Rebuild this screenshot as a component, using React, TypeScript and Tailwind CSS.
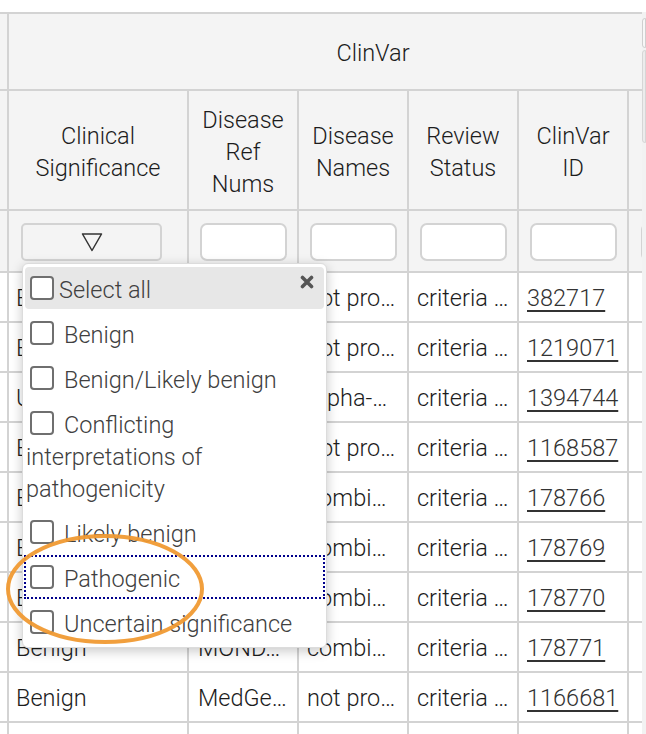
import React from "react";

const rows = [
  { sig: "Benign", ref: "MedGe…", names: "not pro…", id: "382717" },
  { sig: "Benign", ref: "MedGe…", names: "not pro…", id: "1219071" },
  { sig: "Uncertain significance", ref: "MedGe…", names: "Alpha-…", id: "1394744" },
  { sig: "Benign", ref: "MedGe…", names: "not pro…", id: "1168587" },
  { sig: "Benign", ref: "MOND…", names: "combi…", id: "178766" },
  { sig: "Benign", ref: "MOND…", names: "combi…", id: "178769" },
  { sig: "Benign", ref: "MOND…", names: "combi…", id: "178770" },
  { sig: "Benign", ref: "MOND…", names: "combi…", id: "178771" },
  { sig: "Benign", ref: "MedGe…", names: "not pro…", id: "1166681" },
];

const options = [
  "Benign",
  "Benign/Likely benign",
  "Conflicting interpretations of pathogenicity",
  "Likely benign",
  "Pathogenic",
  "Uncertain significance",
];

const cell = "shrink-0 border-r-2 border-b-2 border-[#d3d3d3]";
const dataCell = `${cell} w-[110px] flex items-center pt-[4px] whitespace-nowrap overflow-hidden`;

const Checkbox = ({ tight }: { tight?: boolean }) => (
  <span
    className={`inline-block w-[24px] h-[24px] ml-[4px] border-2 border-[#6f6f6f] rounded-[4px] bg-white align-[-2px] ${
      tight ? "mr-[5px]" : "mr-[10px]"
    }`}
  />
);

const FilterDropdown = () => (
  <div className="absolute left-[13px] top-[52px] z-10 w-[305px] bg-white border border-[#dcdcdc] rounded-[6px] shadow-[0_3px_12px_rgba(0,0,0,0.22)] pt-[3px] pb-[1px] text-[23.5px] leading-[32px] text-[#404040] text-left">
    <div className="relative mx-[2px] mb-[3px] pl-[1px] pt-[7px] pb-[3px] bg-[#e7e7e7] rounded-[4px]">
      <Checkbox tight />
      Select all
      <svg
        className="absolute right-[10px] top-[8px]"
        width="14"
        height="14"
        viewBox="0 0 14 14"
      >
        <path
          d="M2.5 2.5 L11.5 11.5 M11.5 2.5 L2.5 11.5"
          stroke="#555"
          strokeWidth="3.6"
          strokeLinecap="round"
        />
      </svg>
    </div>
    {options.map((o) => (
      <div
        key={o}
        className={`mx-[2px] mb-[3px] pl-[1px] pt-[7px] pb-[3px] ${
          o === "Pathogenic" ? "outline-2 outline-dotted outline-[#00008b] outline-offset-[-1px]" : ""
        }`}
      >
        <Checkbox />
        {o}
      </div>
    ))}
  </div>
);

const App = () => {
  return (
    <div className="relative w-[646px] h-[734px] overflow-hidden bg-white pt-[12px] font-['Roboto',sans-serif] font-light text-[23.5px] text-[#1c1c1c]">
      <div className="flex">
        <div className="w-[642px] overflow-hidden border-t-2 border-[#d3d3d3]">
          {/* group header */}
          <div className="flex h-[77px] bg-[#f4f4f4]">
            <div className={`${cell} w-[9px]`} />
            <div className={`${cell} w-[730px] flex items-center justify-center pt-[4px]`}>ClinVar</div>
          </div>

          {/* column headers */}
          <div className="flex h-[120px] bg-[#f4f4f4] leading-[32px] text-center">
            <div className={`${cell} w-[9px]`} />
            <div className={`${cell} w-[180px] flex items-center justify-center px-2 pt-[4px]`}>
              Clinical Significance
            </div>
            <div className={`${cell} w-[110px] flex items-center justify-center px-2 pt-[4px]`}>
              Disease Ref Nums
            </div>
            <div className={`${cell} w-[110px] flex items-center justify-center px-2 pt-[4px]`}>
              Disease Names
            </div>
            <div className={`${cell} w-[110px] flex items-center justify-center px-2 pt-[4px]`}>
              Review Status
            </div>
            <div className={`${cell} w-[110px] flex items-center justify-center px-2 pt-[4px]`}>
              ClinVar ID
            </div>
            <div className={`${cell} w-[120px]`} />
          </div>

          {/* filters */}
          <div className="flex h-[62px] bg-[#f4f4f4]">
            <div className={`${cell} w-[9px]`} />
            <div className={`${cell} w-[180px] relative pt-[12px] pl-[12px]`}>
              <div className="w-[141px] h-[38px] border-2 border-[#d3d3d3] rounded-[5px] bg-[#f4f4f4] flex items-center justify-center">
                <svg width="22" height="20" viewBox="0 0 22 20">
                  <path d="M1.5 2 L20.5 2 L11 18.5 Z" fill="none" stroke="#333" strokeWidth="1.5" strokeLinejoin="round" />
                </svg>
              </div>
              <FilterDropdown />
            </div>
            {[0, 1, 2, 3].map((i) => (
              <div key={i} className={`${cell} w-[110px] pt-[12px] pl-[11px]`}>
                <div className="w-[87px] h-[38px] border-2 border-[#d3d3d3] rounded-[7px] bg-white" />
              </div>
            ))}
            <div className={`${cell} w-[120px] pt-[12px] pl-[12px]`}>
              <div className="w-[87px] h-[38px] border-2 border-[#d3d3d3] rounded-[7px] bg-white" />
            </div>
          </div>

          {/* data rows */}
          {rows.map((r) => (
            <div key={r.id} className="flex h-[50px] items-stretch">
              <div className={`${cell} w-[9px]`} />
              <div className={`${cell} w-[180px] flex items-center pt-[4px] pl-[7px] pr-2 whitespace-nowrap overflow-hidden`}>
                <span className="truncate">{r.sig}</span>
              </div>
              <div className={`${dataCell} pl-[9px]`}>{r.ref}</div>
              <div className={`${dataCell} pl-[8px]`}>{r.names}</div>
              <div className={`${dataCell} pl-[8px]`}>criteria …</div>
              <div className={`${dataCell} pl-[8px]`}>
                <a href="#" className="text-[#333] underline underline-offset-[4px] decoration-[1.5px]">
                  {r.id}
                </a>
              </div>
              <div className={`${cell} w-[120px]`} />
            </div>
          ))}
          <div className="flex h-[50px]">
            <div className={`${cell} w-[9px]`} />
            <div className={`${cell} w-[180px]`} />
            <div className={`${cell} w-[110px]`} />
            <div className={`${cell} w-[110px]`} />
            <div className={`${cell} w-[110px]`} />
            <div className={`${cell} w-[110px]`} />
          </div>
        </div>

        {/* scrollbar strip */}
        <div className="w-[4px] flex flex-col gap-[2px] pt-[6px] bg-[#f2f2f2]">
          <div className="h-[30px] border border-[#cfcfcf] rounded-l-[3px] bg-[#f7f7f7]" />
          <div className="h-[93px] border border-[#d6d6d6] rounded-l-[3px] bg-[#ececec]" />
        </div>
      </div>

      {/* annotation */}
      <svg className="absolute inset-0 z-20 pointer-events-none" width="646" height="734">
        <ellipse cx="105" cy="589" rx="97" ry="53" fill="none" stroke="#f09a33" strokeWidth="4" opacity="0.95" />
      </svg>
    </div>
  );
};

export default App;
